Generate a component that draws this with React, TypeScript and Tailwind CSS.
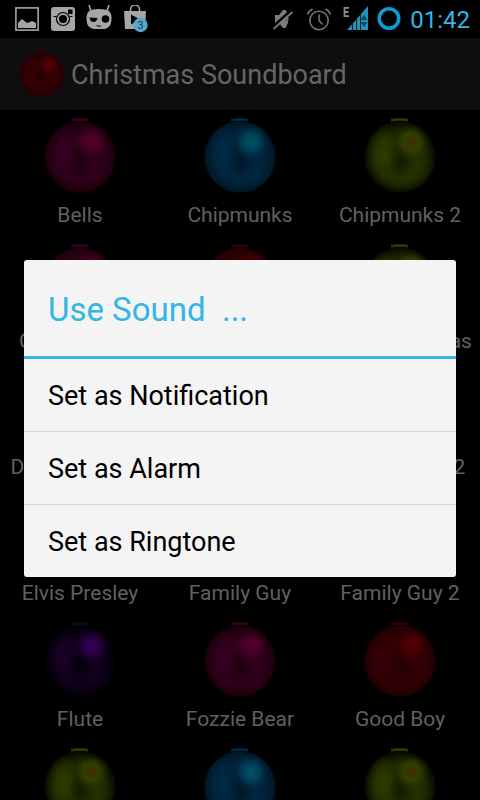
type Tone = 'pink' | 'blue' | 'green' | 'red' | 'purple';

const TONES: Record<Tone, { base: string; edge: string; lobe: string; shine: string; core: string; dark: string }> = {
  pink: { base: '#2a0014', edge: '#1c000c', lobe: '#340022', shine: '#50002a', core: '#54002c', dark: '#1a000c' },
  blue: { base: '#002036', edge: '#001828', lobe: '#002a44', shine: '#004c66', core: '#005060', dark: '#001424' },
  green: { base: '#1a2400', edge: '#081000', lobe: '#303a00', shine: '#384a00', core: '#3e3200', dark: '#101a00' },
  red: { base: '#2e0004', edge: '#220003', lobe: '#340006', shine: '#500002', core: '#500002', dark: '#240002' },
  purple: { base: '#0a0010', edge: '#040008', lobe: '#1a002a', shine: '#320056', core: '#320056', dark: '#060008' },
};

const SOUNDS: { name: string; tone: Tone }[] = [
  { name: 'Bells', tone: 'pink' },
  { name: 'Chipmunks', tone: 'blue' },
  { name: 'Chipmunks 2', tone: 'green' },
  { name: 'Chipmunks 3', tone: 'pink' },
  { name: 'Choir', tone: 'red' },
  { name: 'Cool Christmas', tone: 'green' },
  { name: 'Deck The Halls', tone: 'blue' },
  { name: 'Drummer', tone: 'purple' },
  { name: 'Drunk Santa 2', tone: 'red' },
  { name: 'Elvis Presley', tone: 'red' },
  { name: 'Family Guy', tone: 'green' },
  { name: 'Family Guy 2', tone: 'blue' },
  { name: 'Flute', tone: 'purple' },
  { name: 'Fozzie Bear', tone: 'pink' },
  { name: 'Good Boy', tone: 'red' },
  { name: 'Grandma', tone: 'green' },
  { name: 'Grinch', tone: 'blue' },
  { name: 'Ho Ho Ho', tone: 'green' },
];

const ACTIONS = ['Set as Notification', 'Set as Alarm', 'Set as Ringtone'];

// Shared gradients, one set per bauble colour
function BaubleDefs() {
  return (
    <svg className="absolute h-0 w-0" aria-hidden="true">
      <defs>
        {Object.entries(TONES).map(([tone, c]) => (
          <g key={tone}>
            <radialGradient id={`${tone}-base`}>
              <stop offset="0" stopColor={c.base} />
              <stop offset="0.7" stopColor={c.base} />
              <stop offset="0.95" stopColor={c.edge} />
              <stop offset="1" stopColor={c.edge} stopOpacity="0.3" />
            </radialGradient>
            <radialGradient id={`${tone}-lobe`}>
              <stop offset="0" stopColor={c.lobe} />
              <stop offset="0.4" stopColor={c.lobe} stopOpacity="0.7" />
              <stop offset="1" stopColor={c.lobe} stopOpacity="0" />
            </radialGradient>
            <radialGradient id={`${tone}-dark`}>
              <stop offset="0" stopColor={c.dark} />
              <stop offset="1" stopColor={c.dark} stopOpacity="0" />
            </radialGradient>
            <radialGradient id={`${tone}-shine`}>
              <stop offset="0" stopColor={c.core} />
              <stop offset="0.18" stopColor={c.core} stopOpacity="0.95" />
              <stop offset="0.45" stopColor={c.shine} stopOpacity="0.7" />
              <stop offset="0.75" stopColor={c.shine} stopOpacity="0.18" />
              <stop offset="1" stopColor={c.shine} stopOpacity="0" />
            </radialGradient>
          </g>
        ))}
      </defs>
    </svg>
  );
}

function Bauble({ tone, className }: { tone: Tone; className: string }) {
  return (
    <svg viewBox="0 0 72 76" className={className} aria-hidden="true">
      <path d="M27 2h4l2-1 3 1 3-1 2 1h3" stroke={TONES[tone].lobe} strokeWidth="2.5" fill="none" />
      <circle cx="36" cy="39" r="36" fill={`url(#${tone}-base)`} />
      <ellipse cx="20" cy="36" rx="17" ry="29" fill={`url(#${tone}-lobe)`} />
      <ellipse cx="53" cy="46" rx="17" ry="22" fill={`url(#${tone}-lobe)`} opacity="0.5" />
      <ellipse cx="38" cy="60" rx="26" ry="14" fill={`url(#${tone}-lobe)`} opacity="0.5" />
      <ellipse cx="37" cy="41" rx="12" ry="20" fill={`url(#${tone}-dark)`} opacity="0.8" />
      <circle cx="47" cy="24" r="19" fill={`url(#${tone}-shine)`} />
    </svg>
  );
}

function StatusBar() {
  return (
    <div className="flex h-[38px] shrink-0 items-center justify-between bg-black pr-[10px] pl-[14px]">
      <div className="flex gap-[10px] text-[#a6a6a6]">
        <svg viewBox="0 0 26 28" className="h-7 w-[26px]" fill="currentColor">
          <rect x="1.9" y="2.9" width="22.2" height="22.2" fill="none" stroke="currentColor" strokeWidth="1.6" />
          <path d="M4 23v-5l4-4 5 4 3-1 2-1 4 2v5z" />
        </svg>
        <svg viewBox="0 0 26 28" className="h-7 w-[26px]" fill="currentColor">
          <path
            fillRule="evenodd"
            d="M4 2h18a3 3 0 013 3v18a3 3 0 01-3 3H4a3 3 0 01-3-3V5a3 3 0 013-3zM18 4.500v4.500h4.500V4.500z"
          />
          <path d="M3.500 11.500h3M19.500 11.500h3" stroke="#000" strokeWidth="1.2" />
          <circle cx="13" cy="14" r="6.500" fill="none" stroke="#000" strokeWidth="1.200" />
          <circle cx="13" cy="14" r="4" fill="#000" />
        </svg>
        <svg viewBox="0 0 26 28" className="h-7 w-[26px]" fill="currentColor">
          <path d="M3 0l2 6M23 0l-2 6" stroke="currentColor" strokeWidth="1.6" />
          <path d="M3 6q3-2 10-2t10 2q3 3 2.500 9-.5 8-7 9H7.500q-6.500-1-7-9Q0 9 3 6z" />
          <path d="M3.500 12.500l8 .5q-1 4.500-4.500 4-3-.5-3.500-4.500z" fill="#000" />
          <circle cx="19.500" cy="14" r="3.800" fill="#000" />
          <path d="M10.500 20.500l2 .7 2.500-.2" stroke="#000" fill="none" />
        </svg>
        <svg viewBox="0 0 26 28" className="h-7 w-[26px]" fill="currentColor">
          <path d="M8.500 6V4.500a4.500 4.500 0 019 0V6" fill="none" stroke="currentColor" strokeWidth="1.6" />
          <path d="M2 6h22l-1 18H3z" />
          <path d="M9 9.500v10l9-5z" fill="#000" />
          <circle cx="18.500" cy="20" r="7.200" fill="#5aa6c8" />
          <text x="18.500" y="23.500" fontSize="10" textAnchor="middle" fill="#123a4c">
            3
          </text>
        </svg>
      </div>
      <div className="flex items-center gap-2">
        <svg viewBox="0 0 26 28" className="h-7 w-[26px] text-[#7c7c7c]" fill="currentColor">
          <path d="M3 10h4l4-5h3v18h-3l-4-5H3z" />
          <path d="M13 6q5 8 0 16" fill="none" stroke="currentColor" strokeWidth="2" />
          <path d="M1 21.500L19 5.500" stroke="#000" strokeWidth="2.5" />
          <path d="M1.500 24L20.500 7" stroke="currentColor" strokeWidth="1.700" />
        </svg>
        <svg viewBox="0 0 26 28" className="h-7 w-[26px] text-[#747474]" fill="none" stroke="currentColor" strokeWidth="1.600">
          <circle cx="13" cy="15.500" r="9.200" />
          <path d="M13 9.500v6l3.500 4M1.500 9.500q1.500-4 5-5.500M24.500 9.500q-1.500-4-5-5.500" />
        </svg>
        <svg viewBox="0 0 28 28" className="h-7 w-7">
          <path d="M9 2.800H4.500v8.400H9M4.500 7h4" fill="none" stroke="#8c8c8c" strokeWidth="1.800" />
          <path d="M28 1v24H7z" fill="#2390b8" />
          <path d="M12.500 18v8M16.500 13v13M20.500 9v17" stroke="#06222e" />
          <path d="M24 10l3.500 5h-7zM24 22l3.500-5h-7z" fill="#0b4a62" />
        </svg>
        <svg viewBox="0 0 26 28" className="h-7 w-[26px]" fill="none">
          <circle cx="13" cy="13.500" r="9.700" stroke="#0a9bd2" strokeWidth="3.600" />
          <path d="M4 9q2-3.500 6-5" stroke="#6b8c99" strokeWidth="1.500" strokeDasharray="2 2" />
        </svg>
        <time className="pt-[2px] text-2xl leading-7 text-[#33b5e5]">01:42</time>
      </div>
    </div>
  );
}

function SoundDialog() {
  return (
    <div className="absolute inset-0 flex items-center justify-center px-6 pb-[2px]">
      <div role="dialog" aria-labelledby="dialog-title" className="w-full rounded-[3px] bg-[#f4f4f4]">
        <h2
          id="dialog-title"
          className="border-b-[3px] border-[#33b5e5] px-6 pt-[30px] pb-[26px] text-[33px] leading-10 whitespace-pre text-[#33b5e5]"
        >
          Use Sound  ...
        </h2>
        <ul className="divide-y divide-[#d6d6d6]">
          {ACTIONS.map((action) => (
            <li key={action}>
              <button type="button" className="block w-full px-6 pt-[21px] pb-[19px] text-left text-[27px] leading-8 text-black">
                {action}
              </button>
            </li>
          ))}
        </ul>
      </div>
    </div>
  );
}

export default function App() {
  return (
    <div className="flex h-screen flex-col overflow-hidden bg-black font-['Roboto',sans-serif]">
      <BaubleDefs />
      <StatusBar />
      <div className="relative min-h-0 flex-1 overflow-hidden">
        <header className="flex h-[72px] items-center gap-[6px] bg-[#0e0e0e] pl-[19px]">
          <Bauble tone="red" className="h-12 w-[46px]" />
          <h1 className="pt-[2px] text-[27px] leading-8 text-[#666]">Christmas Soundboard</h1>
        </header>
        <main className="grid grid-cols-3">
          {SOUNDS.map((sound) => (
            <button key={sound.name} type="button" className="flex flex-col items-center gap-[9px] pt-2 pb-[9px]">
              <Bauble tone={sound.tone} className="h-[76px] w-[72px]" />
              <span className="text-[21px] leading-6 whitespace-nowrap text-[#606060]">{sound.name}</span>
            </button>
          ))}
        </main>
        <SoundDialog />
      </div>
    </div>
  );
}
